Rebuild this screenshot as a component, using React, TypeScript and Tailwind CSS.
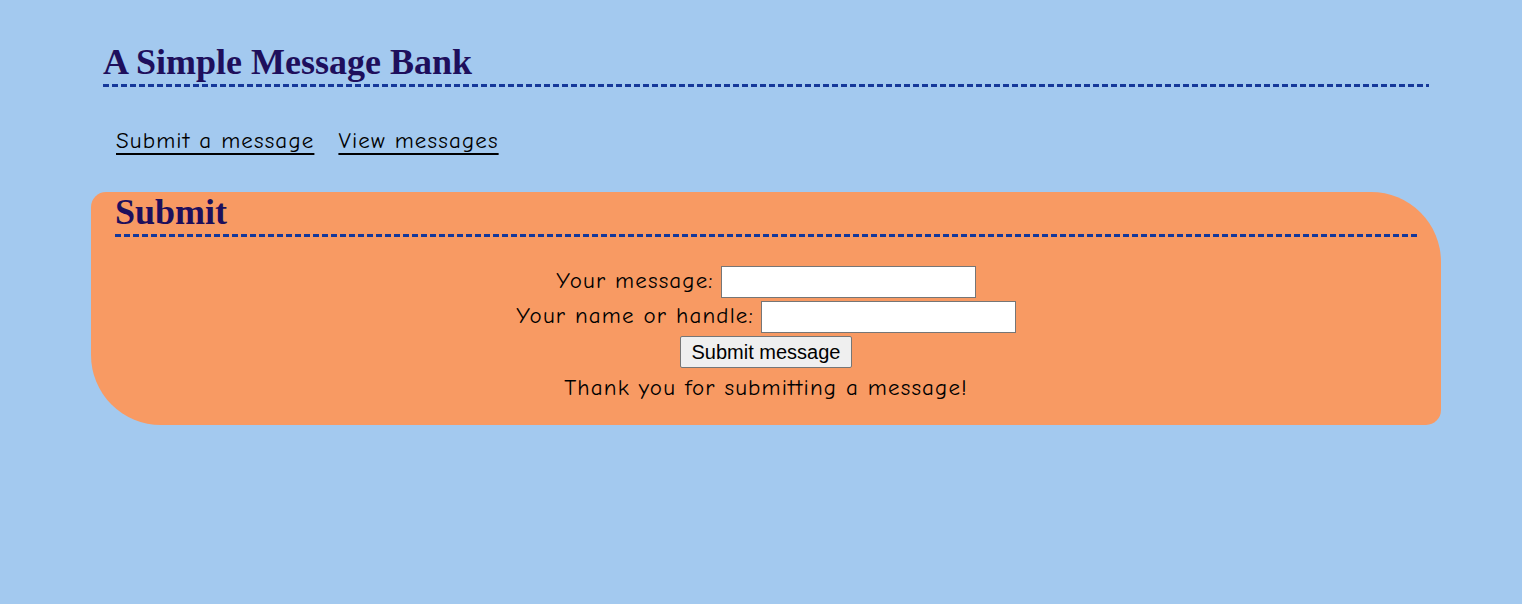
export default function App() {
  const comic = "font-['Comic_Sans_MS','Comic_Neue','Noto_Sans',sans-serif] tracking-[1.15px]";
  const dashed =
    "bg-[image:repeating-linear-gradient(90deg,#15389a_0_6px,transparent_6px_9px)] bg-[length:100%_3px] bg-bottom bg-no-repeat";
  return (
    <div className="min-h-[604px] bg-[#a3c9ef] pt-[44px] pr-[81px] pb-10 pl-[91px]">
      <h1 className={`mx-3 pb-[7px] font-['Liberation_Serif',serif] text-[36px] leading-[36px] font-bold text-[#1e0f5c] ${dashed}`}>
        A Simple Message Bank
      </h1>

      <nav className={`mt-[39px] flex gap-[24px] pl-[25px] text-[23px] leading-[30px] text-black ${comic}`}>
        <a href="#" className="underline decoration-2 underline-offset-[5px]">Submit a message</a>
        <a href="#" className="underline decoration-2 underline-offset-[5px]">View messages</a>
      </nav>

      <section className="mt-[36px] rounded-[15px_70px_15px_70px] bg-[#f89a63] px-6 pb-[20px]">
        <h2 className={`pt-[2px] pb-[7px] font-['Liberation_Serif',serif] text-[36px] leading-[36px] font-bold text-[#1e0f5c] ${dashed}`}>
          Submit
        </h2>
        <form className={`mt-[27px] flex flex-col items-center text-[23px] text-black ${comic}`}>
          <label className="flex h-[35px] items-center gap-[7px]">
            Your message:
            <input type="text" className="h-[32px] w-[255px] border border-[#767676] bg-white" />
          </label>
          <label className="flex h-[35px] items-center gap-[7px]">
            Your name or handle:
            <input type="text" className="h-[32px] w-[255px] border border-[#767676] bg-white" />
          </label>
          <div className="flex h-[36px] items-center">
            <button type="button" className="h-[32px] rounded-[2px] border border-[#767676] bg-[#efefef] px-[11px] font-['Liberation_Sans',Arial,sans-serif] text-[20px] leading-none tracking-normal text-black">
              Submit message
            </button>
          </div>
          <p className="h-[35px] leading-[35px]">Thank you for submitting a message!</p>
        </form>
      </section>
    </div>
  );
}
